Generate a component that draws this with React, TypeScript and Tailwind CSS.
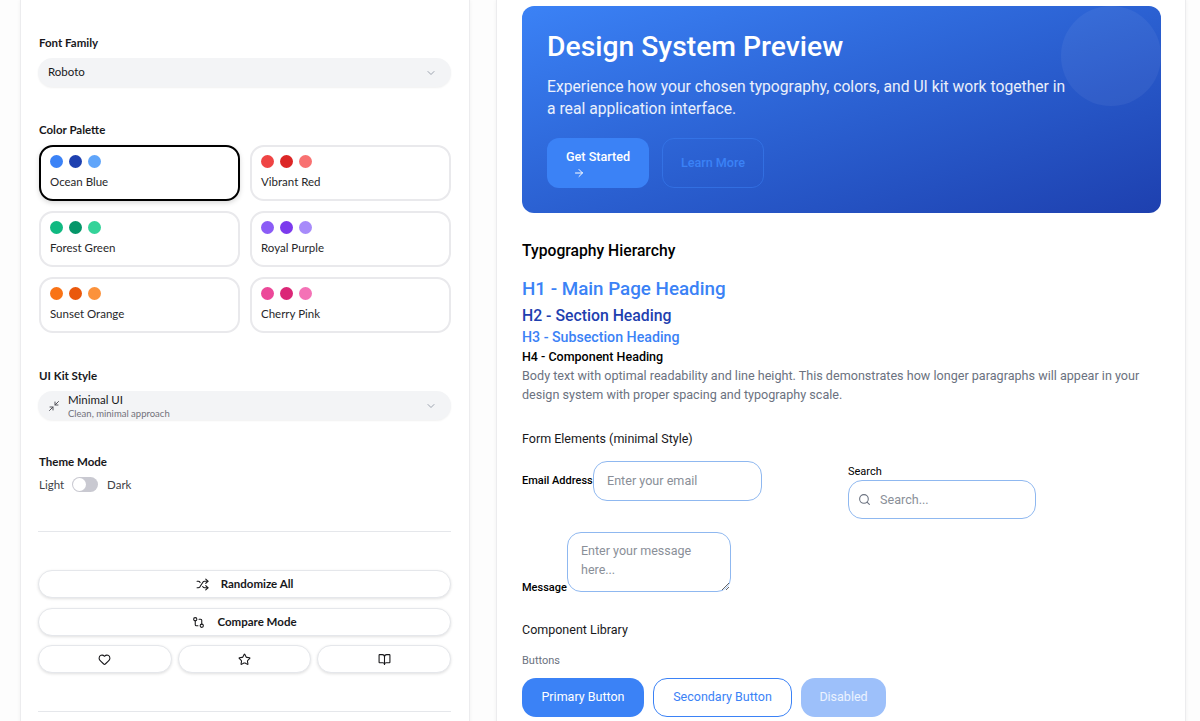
import { ArrowRight, BookOpen, ChevronDown, GitCompare, Heart, Minimize2, Search, Shuffle, Star } from "lucide-react";

const palettes = [
  { name: "Ocean Blue", colors: ["bg-[#3b82f6]", "bg-[#1e40af]", "bg-[#60a5fa]"], active: true },
  { name: "Vibrant Red", colors: ["bg-[#ef4444]", "bg-[#dc2626]", "bg-[#f87171]"] },
  { name: "Forest Green", colors: ["bg-[#10b981]", "bg-[#059669]", "bg-[#34d399]"] },
  { name: "Royal Purple", colors: ["bg-[#8b5cf6]", "bg-[#7c3aed]", "bg-[#a78bfa]"] },
  { name: "Sunset Orange", colors: ["bg-[#f97316]", "bg-[#ea580c]", "bg-[#fb923c]"] },
  { name: "Cherry Pink", colors: ["bg-[#ec4899]", "bg-[#db2777]", "bg-[#f472b6]"] },
];

const pillButton = "flex items-center justify-center rounded-[14px] border border-[#e5e7eb] bg-white shadow-[0_1px_3px_rgba(0,0,0,0.12)] h-[28px]";

function ControlPanel() {
  return (
    <aside className="w-[450px] h-[760px] shrink-0 bg-white border-x border-[#ececee] shadow-[0_0_4px_rgba(0,0,0,0.05)] pl-[17px] pr-[18px] pt-[35px] font-['Lato',sans-serif] text-[#18181b]">
      <h3 className="text-[11.5px] leading-[15px] font-bold ml-px">Font Family</h3>
      <div className="mt-[8px] h-[29px] rounded-full bg-[#f3f4f6] shadow-[0_1px_2px_rgba(0,0,0,0.06)] flex items-center justify-between pl-[10px] pr-[14px]">
        <span className="text-[11.5px] -mt-[2px]">Roboto</span>
        <ChevronDown size={12} className="text-[#9ca3af]" />
      </div>

      <h3 className="mt-[35px] text-[11.5px] leading-[15px] font-bold ml-px">Color Palette</h3>
      <div className="mt-[8px] ml-px grid grid-cols-2 gap-x-[10px] gap-y-[10px]">
        {palettes.map((p) => (
          <button
            key={p.name}
            className={`h-[56px] rounded-[14px] bg-white px-[9px] pt-[8px] text-left flex flex-col border-2 ${p.active ? "border-black shadow-[0_2px_5px_rgba(0,0,0,0.15)]" : "border-[#e9e9ec]"}`}
          >
            <span className="flex gap-[6px]">
              {p.colors.map((c) => (
                <span key={c} className={`w-[13px] h-[13px] rounded-full ${c}`} />
              ))}
            </span>
            <span className="mt-[6px] text-[11.5px] leading-[15px] text-[#27272a]">{p.name}</span>
          </button>
        ))}
      </div>

      <h3 className="mt-[35px] text-[11.5px] leading-[15px] font-bold ml-px">UI Kit Style</h3>
      <div className="mt-[8px] h-[29px] rounded-full bg-[#f3f4f6] shadow-[0_1px_2px_rgba(0,0,0,0.06)] flex items-center justify-between pl-[10px] pr-[10px] overflow-hidden">
        <div className="flex items-center gap-[8px]">
          <Minimize2 size={12} className="text-[#52525b]" />
          <div className="flex flex-col">
            <span className="text-[11.5px] leading-[15px]">Minimal UI</span>
            <span className="text-[9.5px] leading-[13px] text-[#71717a]">Clean, minimal approach</span>
          </div>
        </div>
        <ChevronDown size={12} className="text-[#9ca3af] mr-[4px]" />
      </div>

      <h3 className="mt-[34px] text-[11.5px] leading-[15px] font-bold ml-px">Theme Mode</h3>
      <div className="mt-[8px] ml-px flex items-center gap-[8px] text-[11.5px] leading-[15px] text-[#3f3f46]">
        <span>Light</span>
        <span className="w-[26px] h-[15px] rounded-full bg-[#c9c9d1] p-[1px] flex">
          <span className="w-[13px] h-[13px] rounded-full bg-white" />
        </span>
        <span className="ml-px">Dark</span>
      </div>

      <div className="mt-[39px] border-t border-[#e5e7eb]" />

      <div className="mt-[38px] flex flex-col gap-[10px]">
        <button className={`${pillButton} gap-[12px] text-[11.5px] font-bold`}>
          <Shuffle size={13} />
          Randomize All
        </button>
        <button className={`${pillButton} gap-[12px] text-[11.5px] font-bold`}>
          <GitCompare size={13} />
          Compare Mode
        </button>
        <div className="grid grid-cols-3 gap-[6px] -mt-px">
          <button className={pillButton}><Heart size={13} /></button>
          <button className={pillButton}><Star size={13} /></button>
          <button className={pillButton}><BookOpen size={13} /></button>
        </div>
      </div>

      <div className="mt-[38px] border-t border-[#e5e7eb]" />
    </aside>
  );
}

function Preview() {
  return (
    <main className="w-[690px] h-[760px] shrink-0 bg-white border-x border-[#ececee] shadow-[0_0_4px_rgba(0,0,0,0.05)] pl-[25px] pr-[24px] pt-[6px] font-['Roboto',sans-serif]">
      <section className="relative overflow-hidden h-[207px] rounded-xl bg-gradient-to-br from-[#3b82f6] to-[#1e40af] pl-[25px] pt-[23px] text-white">
        <div className="absolute right-0 top-0 w-[100px] h-[100px] rounded-full bg-white/5" />
        <h1 className="text-[28.3px] leading-[36px] font-medium">Design System Preview</h1>
        <p className="mt-[11px] w-[530px] text-[15.7px] leading-[22px] text-white/90">
          Experience how your chosen typography, colors, and UI kit work together in a real application interface.
        </p>
        <div className="mt-[18px] flex gap-[13px]">
          <button className="w-[102px] h-[50px] rounded-xl bg-[#3b82f6] text-[12.6px] leading-[17px] font-medium text-left pl-[19px]">
            Get Started
            <ArrowRight size={12} className="ml-[7px] mt-[2px]" />
          </button>
          <button className="w-[102px] h-[50px] rounded-xl border border-[#3b82f6]/50 text-[12.6px] font-medium text-[#3b82f6]">
            Learn More
          </button>
        </div>
      </section>

      <h2 className="mt-[28px] text-[15.7px] leading-[20px] font-medium text-black">Typography Hierarchy</h2>
      <div className="mt-[16px] text-[18.8px] leading-[24px] font-medium text-[#3b82f6]">H1 - Main Page Heading</div>
      <div className="mt-[4px] text-[15.8px] leading-[22px] font-medium text-[#1e40af]">H2 - Section Heading</div>
      <div className="text-[14.2px] leading-[20px] font-medium text-[#3b82f6]">H3 - Subsection Heading</div>
      <div className="text-[12.5px] leading-[19px] font-medium text-black">H4 - Component Heading</div>
      <p className="text-[12.6px] leading-[19px] text-[#6b7280]">
        Body text with optimal readability and line height. This demonstrates how longer paragraphs will appear in your design system with proper spacing and typography scale.
      </p>

      <h3 className="mt-[26px] text-[12.5px] leading-[18px] text-[#18181b]">Form Elements (minimal Style)</h3>
      <div className="mt-[13px] grid grid-cols-[326px_1fr] h-[58px]">
        <div className="flex items-center self-start">
          <label className="text-[11px] font-medium text-black w-[71px]">Email Address</label>
          <input
            readOnly
            placeholder="Enter your email"
            className="w-[169px] h-[40px] rounded-[14px] border-[1.5px] border-[#8fb8f0] px-[13px] pb-[2px] text-[12.6px] placeholder:text-[#8a8f98]"
          />
        </div>
        <div className="pt-[4px]">
          <label className="block text-[11px] leading-[14px] text-black">Search</label>
          <div className="mt-[1px] w-[188px] h-[39px] rounded-[14px] border-[1.5px] border-[#8fb8f0] flex items-center pl-[9px] gap-[9px]">
            <Search size={13} className="text-[#6b7280]" />
            <span className="text-[12.6px] pt-px text-[#8a8f98]">Search...</span>
          </div>
        </div>
      </div>
      <div className="mt-[13px] flex items-end">
        <label className="text-[11px] leading-[14px] font-medium text-black w-[45px] -mb-[3px]">Message</label>
        <textarea
          readOnly
          placeholder="Enter your message here..."
          className="block w-[164px] h-[60px] rounded-[14px] border-[1.5px] border-[#8fb8f0] px-[13px] py-[8px] text-[12.5px] leading-[19px] placeholder:text-[#8a8f98]"
        />
      </div>

      <h3 className="mt-[29px] text-[12.5px] leading-[18px] text-[#18181b]">Component Library</h3>
      <div className="mt-[15px] text-[11px] leading-[14px] text-[#6b7280]">Buttons</div>
      <div className="mt-[10px] flex gap-[9px] text-[12.5px]">
        <button className="w-[122px] h-[39px] rounded-[14px] bg-[#3b82f6] text-white">Primary Button</button>
        <button className="w-[139px] h-[39px] rounded-[14px] border border-[#3b82f6] text-[#3b82f6]">Secondary Button</button>
        <button className="w-[85px] h-[39px] rounded-[14px] bg-[#9dc0fa] text-white/80">Disabled</button>
      </div>
    </main>
  );
}

export default function App() {
  return (
    <div className="h-[721px] overflow-hidden bg-[#fdfdfd] pl-[20px] flex gap-[26px]">
      <ControlPanel />
      <Preview />
    </div>
  );
}
